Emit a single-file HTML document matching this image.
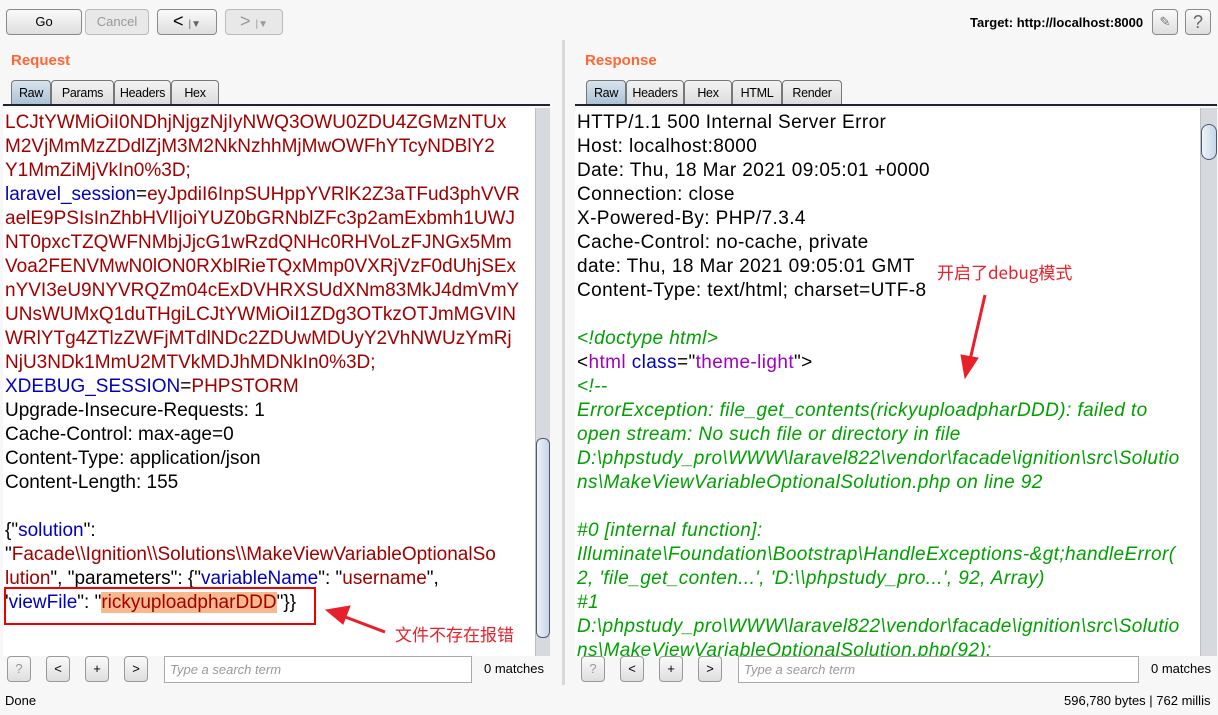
<!DOCTYPE html>
<html><head><meta charset="utf-8"><style>
*{margin:0;padding:0;box-sizing:border-box}
body{width:1218px;height:715px;background:#f7f7f7;font-family:"Liberation Sans","Noto Sans CJK SC",sans-serif;position:relative;overflow:hidden}
.btn{position:absolute;height:26px;border:1px solid #8a8a8a;border-radius:4px;background:linear-gradient(#fafafa,#dedede);font-size:13px;text-align:center;line-height:24px;color:#000}
.dis{color:#999;border-color:#bbb;background:#e8e8e8}
.h{position:absolute;font-weight:bold;font-size:15px;color:#ff6633}
.tab{position:absolute;top:80px;height:25px;border:1px solid #777;border-bottom:none;border-radius:4px 4px 0 0;background:linear-gradient(#f3f3f3,#dcdcdc);font-size:12.5px;line-height:24px;text-align:center;letter-spacing:-0.3px}
.tab.sel{background:linear-gradient(#d8e4ee,#a9c0d4)}
.line{position:absolute;height:2px;background:#223}
.ed{position:absolute;top:108px;background:#fff;overflow:hidden;font-size:19px;line-height:24px;white-space:nowrap;padding-top:3px;padding-left:2px}
.ed div{height:24px}
.r{color:#a00000}.b{color:#0000c0}.g{color:#00a000;font-style:italic}.p{color:#a000c0}
.sb{position:absolute;top:108px;background:#d6d9de;border-left:1px solid #c0c0c0}
.sbtn{position:absolute;width:24px;height:26px;border:1px solid #999;border-radius:4px;background:linear-gradient(#fafafa,#dedede);font-size:13px;text-align:center;line-height:24px}
.search{position:absolute;height:27px;border:1px solid #aaa;background:#fff;font-size:13px;font-style:italic;color:#999;line-height:25px;padding-left:5px}
.m{position:absolute;font-size:13px}
</style></head><body>
<div class="btn" style="left:6px;top:9px;width:76px">Go</div>
<div class="btn dis" style="left:85px;top:9px;width:64px">Cancel</div>
<div class="btn" style="left:157px;top:9px;width:60px;font-size:18px;line-height:22px">&lt; <span style="font-size:10px;color:#666">|▼</span></div>
<div class="btn dis" style="left:225px;top:9px;width:58px;font-size:18px;line-height:22px">&gt; <span style="font-size:10px">|▼</span></div>
<div style="position:absolute;left:970px;top:15px;font-size:13px;font-weight:bold">Target: http://localhost:8000</div>
<div class="btn" style="left:1152px;top:9px;width:26px;color:#777">✎</div>
<div class="btn" style="left:1185px;top:9px;width:26px;font-size:18px;color:#666">?</div>
<div style="position:absolute;left:562px;top:40px;width:3px;height:645px;background:#d8d8d8"></div>

<div class="h" style="left:11px;top:52px">Request</div>
<div class="tab sel" style="left:11px;width:40px">Raw</div>
<div class="tab" style="left:51px;width:63px">Params</div>
<div class="tab" style="left:114px;width:57px">Headers</div>
<div class="tab" style="left:171px;width:48px">Hex</div>
<div class="line" style="left:3px;top:104px;width:547px"></div>

<div class="h" style="left:585px;top:52px">Response</div>
<div class="tab sel" style="left:586px;width:40px">Raw</div>
<div class="tab" style="left:626px;width:58px">Headers</div>
<div class="tab" style="left:684px;width:48px">Hex</div>
<div class="tab" style="left:732px;width:50px">HTML</div>
<div class="tab" style="left:782px;width:60px">Render</div>
<div class="line" style="left:575px;top:104px;width:642px"></div>

<div class="ed" style="left:3px;width:532px;height:548px">
<div class="r">LCJtYWMiOiI0NDhjNjgzNjIyNWQ3OWU0ZDU4ZGMzNTUx</div>
<div class="r">M2VjMmMzZDdlZjM3M2NkNzhhMjMwOWFhYTcyNDBlY2</div>
<div class="r">Y1MmZiMjVkIn0%3D;</div>
<div><span class="b">laravel_session</span>=<span class="r">eyJpdiI6InpSUHppYVRlK2Z3aTFud3phVVR</span></div>
<div class="r">aelE9PSIsInZhbHVlIjoiYUZ0bGRNblZFc3p2amExbmh1UWJ</div>
<div class="r">NT0pxcTZQWFNMbjJjcG1wRzdQNHc0RHVoLzFJNGx5Mm</div>
<div class="r">Voa2FENVMwN0lON0RXblRieTQxMmp0VXRjVzF0dUhjSEx</div>
<div class="r">nYVI3eU9NYVRQZm04cExDVHRXSUdXNm83MkJ4dmVmY</div>
<div class="r">UNsWUMxQ1duTHgiLCJtYWMiOiI1ZDg3OTkzOTJmMGVIN</div>
<div class="r">WRlYTg4ZTlzZWFjMTdlNDc2ZDUwMDUyY2VhNWUzYmRj</div>
<div class="r">NjU3NDk1MmU2MTVkMDJhMDNkIn0%3D;</div>
<div><span class="b">XDEBUG_SESSION</span>=<span class="r">PHPSTORM</span></div>
<div>Upgrade-Insecure-Requests: 1</div>
<div>Cache-Control: max-age=0</div>
<div>Content-Type: application/json</div>
<div>Content-Length: 155</div>
<div></div>
<div>{"<span class="b">solution</span>":</div>
<div>"<span class="r">Facade\\Ignition\\Solutions\\MakeViewVariableOptionalSo</span></div>
<div><span class="r">lution</span>", "<span>parameters</span>": {"<span class="b">variableName</span>": "<span class="r">username</span>",</div>
<div>'<span class="b">viewFile</span>": "<span class="r" style="background:#f9b98e">rickyuploadpharDDD</span>"}}</div>
</div>
<div class="sb" style="left:535px;width:15px;height:548px"><div style="position:absolute;top:330px;left:0;width:14px;height:200px;background:linear-gradient(90deg,#eef3f8,#c4d6e6);border:1px solid #557;border-radius:6px"></div></div>

<div class="ed" style="left:575px;width:625px;height:548px;letter-spacing:0.4px">
<div>HTTP/1.1 500 Internal Server Error</div>
<div>Host: localhost:8000</div>
<div>Date: Thu, 18 Mar 2021 09:05:01 +0000</div>
<div>Connection: close</div>
<div>X-Powered-By: PHP/7.3.4</div>
<div>Cache-Control: no-cache, private</div>
<div>date: Thu, 18 Mar 2021 09:05:01 GMT</div>
<div>Content-Type: text/html; charset=UTF-8</div>
<div></div>
<div class="g">&lt;!doctype html&gt;</div>
<div>&lt;<span class="p">html</span> <span class="b">class</span>="<span class="p">theme-light</span>"&gt;</div>
<div class="g">&lt;!--</div>
<div class="g">ErrorException: file_get_contents(rickyuploadpharDDD): failed to</div>
<div class="g">open stream: No such file or directory in file</div>
<div class="g">D:\phpstudy_pro\WWW\laravel822\vendor\facade\ignition\src\Solutio</div>
<div class="g">ns\MakeViewVariableOptionalSolution.php on line 92</div>
<div></div>
<div class="g">#0 [internal function]:</div>
<div class="g">Illuminate\Foundation\Bootstrap\HandleExceptions-&amp;gt;handleError(</div>
<div class="g">2, 'file_get_conten...', 'D:\\phpstudy_pro...', 92, Array)</div>
<div class="g">#1</div>
<div class="g">D:\phpstudy_pro\WWW\laravel822\vendor\facade\ignition\src\Solutio</div>
<div class="g">ns\MakeViewVariableOptionalSolution.php(92):</div>
</div>
<div class="sb" style="left:1200px;width:17px;height:548px"><div style="position:absolute;top:16px;left:0;width:16px;height:36px;background:linear-gradient(90deg,#eef3f8,#c4d6e6);border:1px solid #557;border-radius:8px"></div></div>

<div style="position:absolute;left:4px;top:587px;width:312px;height:38px;border:2px solid #e00"></div>
<svg style="position:absolute;left:0;top:0;z-index:5" width="1218" height="715"><g fill="#e8202a" stroke="#e8202a"><line x1="385" y1="632" x2="340" y2="615" stroke-width="3"/><polygon points="326,610 350,606 343,624"/><line x1="985" y1="295" x2="970" y2="360" stroke-width="3"/><polygon points="965,378 961,355 978,358"/></g>
<text x="395" y="641" font-size="17" fill="#e8202a" font-family="Noto Sans CJK SC,sans-serif">文件不存在报错</text>
<text x="937" y="279" font-size="17" fill="#e8202a" font-family="Noto Sans CJK SC,sans-serif">开启了debug模式</text></svg>

<div class="sbtn" style="left:7px;top:656px;color:#999">?</div>
<div class="sbtn" style="left:46px;top:656px">&lt;</div>
<div class="sbtn" style="left:85px;top:656px">+</div>
<div class="sbtn" style="left:124px;top:656px">&gt;</div>
<div class="search" style="left:164px;top:656px;width:308px">Type a search term</div>
<div class="m" style="left:484px;top:661px">0 matches</div>
<div class="sbtn" style="left:581px;top:656px;color:#999">?</div>
<div class="sbtn" style="left:620px;top:656px">&lt;</div>
<div class="sbtn" style="left:659px;top:656px">+</div>
<div class="sbtn" style="left:698px;top:656px">&gt;</div>
<div class="search" style="left:738px;top:656px;width:401px">Type a search term</div>
<div class="m" style="left:1151px;top:661px">0 matches</div>
<div class="m" style="left:5px;top:693px">Done</div>
<div class="m" style="left:1064px;top:693px">596,780 bytes | 762 millis</div>
</body></html>
